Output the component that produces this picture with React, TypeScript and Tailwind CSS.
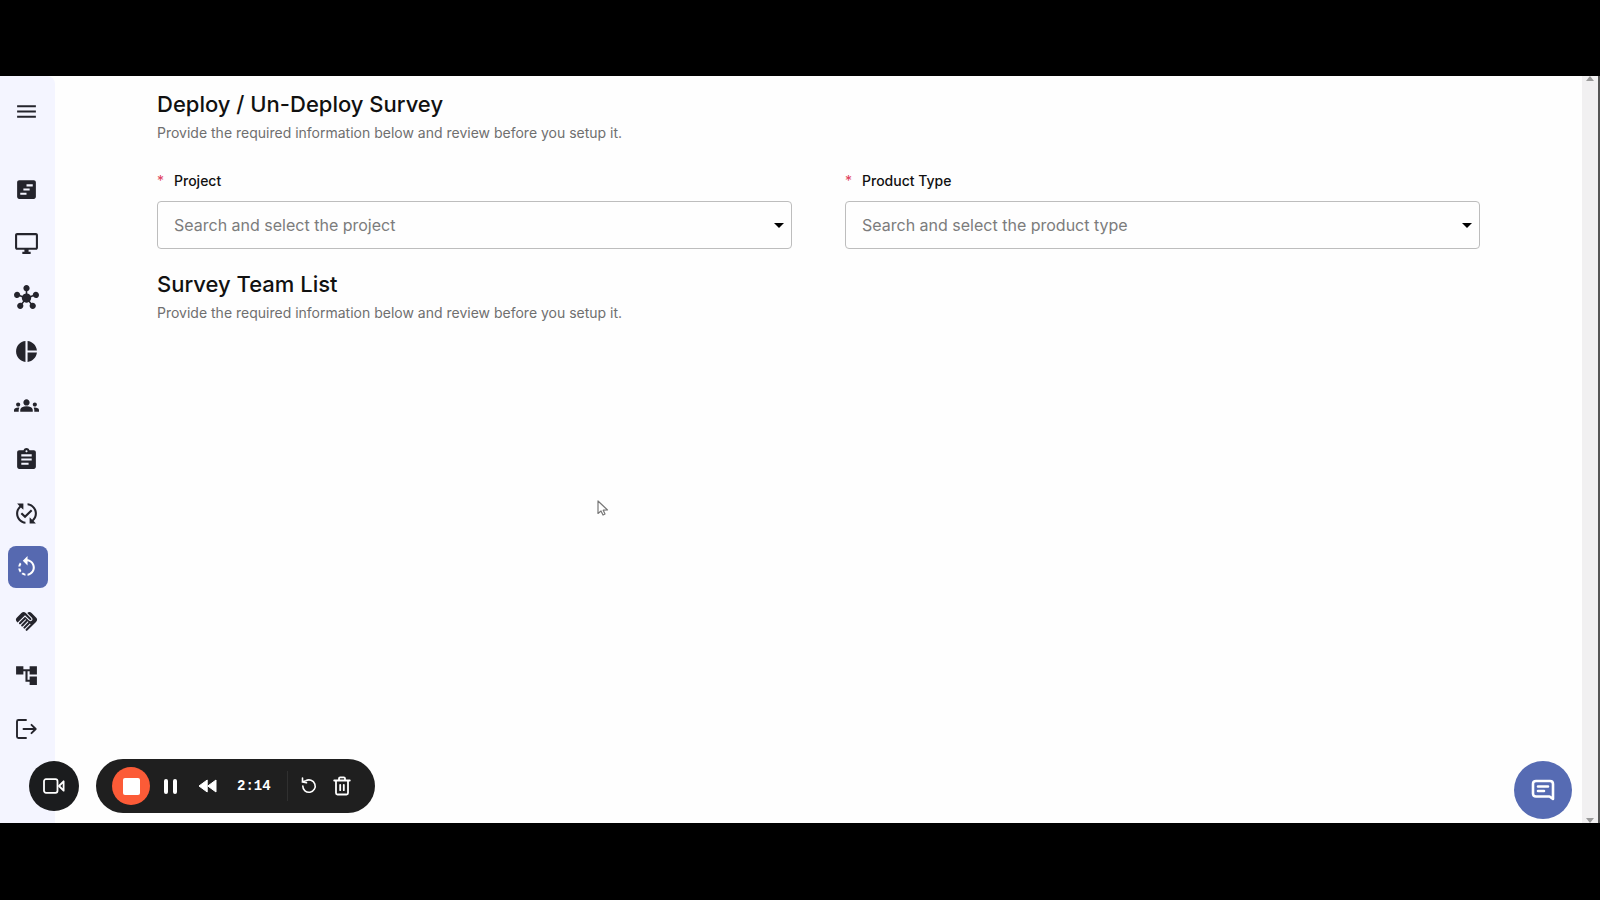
import type { ReactNode } from "react";
import {
  MdAccountTree,
  MdArrowDropDown,
  MdAssignment,
  MdGroups,
  MdHandshake,
  MdHub,
  MdMenu,
  MdOutlineDesktopWindows,
  MdPieChart,
  MdPublishedWithChanges,
  MdRotateLeft,
  MdViewTimeline,
} from "react-icons/md";

function LogoutIcon() {
  return (
    <svg viewBox="0 0 24 24" className="size-6" fill="none" stroke="currentColor" strokeWidth="1.9" strokeLinecap="round" strokeLinejoin="round">
      <path d="M12 3H4.5C3.4 3 3 3.4 3 4.5v15c0 1.100.4 1.500 1.500 1.500H12M9.500 12h12M17.500 7.800l4.200 4.200-4.200 4.200" />
    </svg>
  );
}

const navItems: { label: string; icon: ReactNode; active?: boolean }[] = [
  { label: "Timeline", icon: <MdViewTimeline className="size-[25px]" /> },
  { label: "Desktop", icon: <MdOutlineDesktopWindows className="size-[25px]" /> },
  { label: "Hub", icon: <MdHub className="size-[25px]" /> },
  { label: "Reports", icon: <MdPieChart className="size-[25px]" /> },
  { label: "Teams", icon: <MdGroups className="size-[25px]" /> },
  { label: "Assignments", icon: <MdAssignment className="size-[25px]" /> },
  { label: "Approvals", icon: <MdPublishedWithChanges className="size-[25px]" /> },
  { label: "Deploy survey", icon: <MdRotateLeft className="size-[25px]" />, active: true },
  { label: "Partners", icon: <MdHandshake className="size-[25px]" /> },
  { label: "Structure", icon: <MdAccountTree className="size-[25px]" /> },
  { label: "Log out", icon: <LogoutIcon /> },
];

function Sidebar() {
  return (
    <nav aria-label="Main" className="flex w-[55px] shrink-0 flex-col rounded-tr-lg bg-[#f4f5ff] pl-2 text-[#24242c]">
      <button aria-label="Open menu" className="mt-[15px] flex h-10 w-10 items-center justify-center pr-1">
        <MdMenu className="size-[25px]" />
      </button>
      <ul className="mt-[31px]">
        {navItems.map((item) => (
          <li key={item.label} className="flex h-[54px] items-center">
            <a
              href="#"
              aria-label={item.label}
              className={
                item.active
                  ? "flex h-[42px] w-10 items-center justify-center rounded-lg bg-[#5669b0] pr-1 text-white"
                  : "flex h-[42px] w-10 items-center justify-center pr-1"
              }
            >
              {item.icon}
            </a>
          </li>
        ))}
      </ul>
    </nav>
  );
}

function SectionHeading({ title }: { title: string }) {
  return (
    <header>
      <h2 className="text-[22px] leading-8 font-medium text-[#111]">{title}</h2>
      <p className="mt-0.5 text-sm leading-[22px] text-[#6f6f6f]">
        Provide the required information below and review before you setup it.
      </p>
    </header>
  );
}

function Combobox({ id, label, placeholder }: { id: string; label: string; placeholder: string }) {
  return (
    <div className="min-w-0 flex-1">
      <label htmlFor={id} className="flex gap-2.5 text-sm leading-6 font-medium text-[#111]">
        <span className="font-normal text-[#e0405c]">*</span>
        {label}
      </label>
      <div className="mt-2 flex h-12 items-center rounded border border-[#bdbdbd] pl-4">
        <input
          id={id}
          type="text"
          role="combobox"
          aria-expanded="false"
          placeholder={placeholder}
          className="min-w-0 flex-1 bg-transparent text-base outline-none placeholder:text-[#7c7c7c]"
        />
        <button type="button" aria-label={`Show ${label} options`} className="text-black">
          <MdArrowDropDown className="size-6" />
        </button>
      </div>
    </div>
  );
}

function RecorderBar() {
  return (
    <div className="absolute bottom-2.5 left-[29px] flex items-center gap-[17px] text-white">
      <button aria-label="Camera" className="flex size-[50px] items-center justify-center rounded-full bg-[#1b1c1e]">
        <svg viewBox="0 0 22 16" className="h-4 w-[22px]" fill="none" stroke="currentColor" strokeWidth="1.8" strokeLinejoin="round">
          <rect x="1" y="1.200" width="13.500" height="13.600" rx="2" />
          <path d="M20.600 3.300v9.400L16 8z" />
        </svg>
      </button>
      <div className="flex h-[54px] items-center rounded-full bg-[#1f1f1f] pr-6 pl-4">
        <button aria-label="Stop recording" className="flex size-[38px] items-center justify-center rounded-full bg-[#fc5b37]">
          <span className="size-[17px] rounded-[2px] bg-white" />
        </button>
        <button aria-label="Pause" className="ml-3 flex w-4 justify-center gap-[5px]">
          <span className="h-[15px] w-1 rounded-[2px] bg-white" />
          <span className="h-[15px] w-1 rounded-[2px] bg-white" />
        </button>
        <button aria-label="Rewind" className="ml-5">
          <svg viewBox="0 0 19 14" className="h-3.5 w-[19px]" fill="currentColor" stroke="currentColor" strokeLinejoin="round">
            <path d="M9.200 1v12L1 7zM18 1v12L9.800 7z" />
          </svg>
        </button>
        <span className="ml-5 font-['Liberation_Mono',monospace] text-sm font-bold">2:14</span>
        <span className="ml-4 h-[30px] w-px bg-[#303030]" />
        <button aria-label="Restart" className="ml-3">
          <svg viewBox="0 0 18 18" className="size-[18px]" fill="none" stroke="currentColor" strokeWidth="1.6" strokeLinecap="round" strokeLinejoin="round">
            <path d="M2.800 9a6.200 6.200 0 1 0 3-5.200L2.300 5M2.500 1v4l4 .8" />
          </svg>
        </button>
        <button aria-label="Delete recording" className="ml-[15px]">
          <svg viewBox="0 0 18 20" className="h-5 w-[18px]" fill="none" stroke="currentColor" strokeWidth="1.8" strokeLinecap="round" strokeLinejoin="round">
            <path d="M1.200 4.500h15.600M3 4.500v12.500q0 1.500 1.500 1.500h9q1.500 0 1.500-1.500V4.500M6 4.200V2.500Q6 1.300 7.200 1.300h3.600q1.200 0 1.200 1.200v1.700M7.200 8.800v5.400M10.800 8.800v5.400" />
          </svg>
        </button>
      </div>
    </div>
  );
}

function ScrollTrack() {
  return (
    <div aria-hidden="true" className="flex w-[18px] shrink-0 flex-col items-center justify-between border-r-2 border-[#555] bg-[#f1f0f1] text-[#9a9a9a]">
      <svg viewBox="0 0 8 5" className="h-[5px] w-2" fill="currentColor">
        <path d="M4 0l4 5H0z" />
      </svg>
      <svg viewBox="0 0 8 5" className="h-[5px] w-2" fill="currentColor">
        <path d="M0 0h8L4 5z" />
      </svg>
    </div>
  );
}

export default function App() {
  return (
    <div className="flex min-h-screen flex-col bg-black pt-19 pb-[77px] font-[Inter,sans-serif]">
      <div className="relative flex flex-1 bg-[#fefefe]">
        <Sidebar />
        <main className="flex-1 px-[102px] pt-3">
          <SectionHeading title="Deploy / Un-Deploy Survey" />
          <form className="mt-[25px] mb-[19px] flex gap-[53px]">
            <Combobox id="project" label="Project" placeholder="Search and select the project" />
            <Combobox id="product-type" label="Product Type" placeholder="Search and select the product type" />
          </form>
          <SectionHeading title="Survey Team List" />
        </main>
        <ScrollTrack />
        <RecorderBar />
        <button aria-label="Open chat" className="absolute right-7 bottom-1 flex size-[58px] items-center justify-center rounded-full bg-[#566bb3] text-white">
          <svg viewBox="0 0 24 22" className="h-[22px] w-6" fill="none" stroke="currentColor" strokeWidth="2.600" strokeLinejoin="round" strokeLinecap="round">
            <path d="M5 2h14q3 0 3 3v15l-3.500-2.500H5q-3 0-3-3V5q0-3 3-3zM7 7.500h10M7 12h6" />
          </svg>
        </button>
        <svg aria-hidden="true" viewBox="0 0 12 16" className="absolute top-[424px] left-[597px] h-4 w-3" fill="#fff" stroke="#777" strokeWidth="1.200" strokeLinejoin="round">
          <path d="M1 1v12.500l3-2.500 2 4 2-1-1.800-3.800L10.500 10z" />
        </svg>
      </div>
    </div>
  );
}
